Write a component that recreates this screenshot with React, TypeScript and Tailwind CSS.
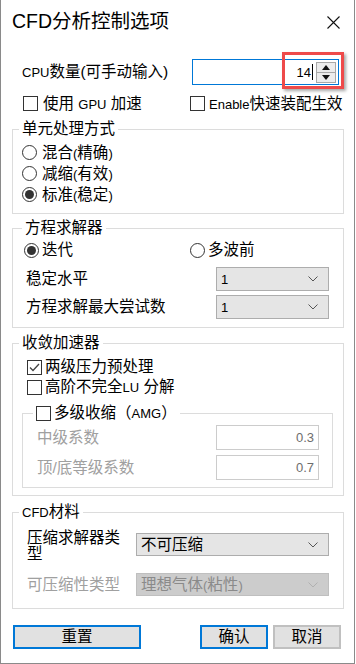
import React from 'react';

const Lat: React.FC<{ children: React.ReactNode }> = ({ children }) => (
  <span className="text-[13px]">{children}</span>
);

const Checkbox: React.FC<{ checked?: boolean }> = ({ checked }) => (
  <div className="w-[15px] h-[15px] shrink-0 border border-[#333333] bg-white flex items-center justify-center">
    {checked && (
      <svg width="11" height="9" viewBox="0 0 11 9">
        <path d="M1 4.5 L4 7.5 L10 1" fill="none" stroke="#444" strokeWidth="1.3" />
      </svg>
    )}
  </div>
);

const Radio: React.FC<{ checked?: boolean }> = ({ checked }) => (
  <div className="w-[15px] h-[15px] shrink-0 rounded-full border border-[#333333] bg-white flex items-center justify-center">
    {checked && <div className="w-[9px] h-[9px] rounded-full bg-[#333333]" />}
  </div>
);

const Chevron: React.FC<{ color?: string }> = ({ color = '#555' }) => (
  <svg width="10" height="6" viewBox="0 0 10 6">
    <path d="M0.5 0.5 L5 5 L9.5 0.5" fill="none" stroke={color} strokeWidth="1" />
  </svg>
);

const SelectBox: React.FC<{ value: React.ReactNode; className: string; disabled?: boolean }> = ({
  value,
  className,
  disabled,
}) => (
  <div
    className={`flex items-center justify-between border pl-[4px] pr-[10px] ${
      disabled ? 'bg-[#cccccc] border-[#bfbfbf] text-[#8a8a8a]' : 'bg-[#e5e5e5] border-[#adadad] text-black'
    } ${className}`}
  >
    <span>{value}</span>
    <Chevron color={disabled ? '#b0b0b0' : '#555'} />
  </div>
);

const Legend: React.FC<{ children: React.ReactNode; className?: string }> = ({ children, className = 'ml-[6px]' }) => (
  <legend className={`px-[3px] leading-[20px] ${className}`}>{children}</legend>
);

export default function App() {
  return (
    <div className="w-[355px] h-[664px] bg-white border-l border-r border-b border-[#8a8a8a] relative font-['Liberation_Sans','Noto_Sans_CJK_SC',sans-serif] text-[15.5px] text-black leading-none">
      {/* Title bar */}
      <div className="h-[44px] flex items-start justify-between pl-[11px] pr-[14px] pt-[9px]">
        <div className="text-[19.5px] leading-[24px]">CFD分析控制选项</div>
        <svg width="13" height="13" viewBox="0 0 13 13" className="mt-[7px]">
          <path d="M0.5 0.5 L12.5 12.5 M12.5 0.5 L0.5 12.5" stroke="#111" strokeWidth="1.1" />
        </svg>
      </div>

      {/* CPU row */}
      <div className="mt-[15px] h-[26px] flex items-center pl-[21px]">
        <div className="w-[170px]">
          <Lat>CPU</Lat>数量(可手动输入)
        </div>
        <div className="w-[147px] h-[26px] border border-[#0078d7] flex items-center justify-end pr-[2px]">
          <span className="text-[13px] mr-[1px]">14</span>
          <div className="w-[1px] h-[16px] bg-black mr-[3px]" />
          <div className="w-[20px] h-[21px] border border-[#a8a8a8] flex flex-col">
            <div className="flex-1 bg-[#ececec] border-b border-[#a8a8a8] flex items-center justify-center">
              <svg width="8" height="5" viewBox="0 0 8 5">
                <path d="M0 5 L4 0 L8 5 Z" fill="#111" />
              </svg>
            </div>
            <div className="flex-1 bg-[#ececec] flex items-center justify-center">
              <svg width="8" height="5" viewBox="0 0 8 5">
                <path d="M0 0 L4 5 L8 0 Z" fill="#111" />
              </svg>
            </div>
          </div>
        </div>
      </div>

      {/* Checkbox row */}
      <div className="mt-[10px] h-[17px] flex items-center pl-[22px]">
        <div className="w-[167px] flex items-center gap-[5px]">
          <Checkbox />
          <span>
            使用 <Lat>GPU</Lat> 加速
          </span>
        </div>
        <div className="flex items-center gap-[4px] whitespace-nowrap">
          <Checkbox />
          <span>
            <Lat>Enable</Lat>快速装配生效
          </span>
        </div>
      </div>

      {/* 单元处理方式 */}
      <fieldset className="mt-[7px] ml-[11px] mr-[10px] border border-[#dcdcdc]">
        <Legend>单元处理方式</Legend>
        <div className="mt-[3px] pl-[9px] pb-[8px]">
          {[
            ['混合', '精确', false],
            ['减缩', '有效', false],
            ['标准', '稳定', true],
          ].map(([a, b, c]) => (
            <div key={a as string} className="h-[21px] flex items-center gap-[5px]">
              <Radio checked={c as boolean} />
              <span>
                {a}
                <Lat>(</Lat>
                {b}
                <Lat>)</Lat>
              </span>
            </div>
          ))}
        </div>
      </fieldset>

      {/* 方程求解器 */}
      <fieldset className="mt-[4px] ml-[11px] mr-[10px] border border-[#dcdcdc]">
        <Legend className="ml-[9px]">方程求解器</Legend>
        <div className="pl-[11px] pr-[14px] pb-[8px]">
          <div className="mt-[1px] h-[22px] flex items-center">
            <div className="w-[166px] flex items-center gap-[3px]">
              <Radio checked />
              <span>迭代</span>
            </div>
            <div className="flex items-center gap-[3px]">
              <Radio />
              <span>多波前</span>
            </div>
          </div>
          <div className="mt-[6px] h-[24px] flex items-center justify-between">
            <span className="ml-[2px]">稳定水平</span>
            <SelectBox value={<Lat>1</Lat>} className="w-[113px] h-[24px]" />
          </div>
          <div className="mt-[4px] h-[24px] flex items-center justify-between">
            <span className="ml-[2px]">方程求解最大尝试数</span>
            <SelectBox value={<Lat>1</Lat>} className="w-[113px] h-[24px]" />
          </div>
        </div>
      </fieldset>

      {/* 收敛加速器 */}
      <fieldset className="mt-[5px] ml-[11px] mr-[10px] border border-[#dcdcdc]">
        <Legend>收敛加速器</Legend>
        <div className="pb-[7px]">
          <div className="mt-[4px] pl-[14px]">
            <div className="h-[20px] flex items-center gap-[3px]">
              <Checkbox checked />
              <span>两级压力预处理</span>
            </div>
            <div className="h-[20px] flex items-center gap-[3px]">
              <Checkbox />
              <span>
                高阶不完全<Lat>LU</Lat> 分解
              </span>
            </div>
          </div>
          <fieldset className="mt-[6px] ml-[9px] mr-[10px] border border-[#dcdcdc]">
            <legend className="ml-[10px] px-[3px] h-[20px] flex items-center gap-[3px]">
              <Checkbox />
              <span>
                多级收缩（<Lat>AMG</Lat>）
              </span>
            </legend>
            <div className="pl-[14px] pr-[13px] pb-[7px]">
              <div className="mt-[2px] h-[25px] flex items-center justify-between text-[#a0a0a0]">
                <span>中级系数</span>
                <div className="w-[103px] h-[25px] border border-[#cccccc] flex items-center justify-end pr-[4px] text-[#6d6d6d]">
                  <Lat>0.3</Lat>
                </div>
              </div>
              <div className="mt-[5px] h-[25px] flex items-center justify-between text-[#a0a0a0]">
                <span>顶/底等级系数</span>
                <div className="w-[103px] h-[25px] border border-[#cccccc] flex items-center justify-end pr-[4px] text-[#6d6d6d]">
                  <Lat>0.7</Lat>
                </div>
              </div>
            </div>
          </fieldset>
        </div>
      </fieldset>

      {/* CFD材料 */}
      <fieldset className="mt-[6px] ml-[11px] mr-[10px] border border-[#dcdcdc]">
        <Legend>
          <Lat>CFD</Lat>材料
        </Legend>
        <div className="pl-[14px] pr-[14px] pb-[12px]">
          <div className="mt-[10px] h-[23px] flex items-start">
            <div className="w-[100px] leading-[16px] -mt-[3px]">压缩求解器类型</div>
            <SelectBox value="不可压缩" className="ml-auto w-[193px] h-[23px]" />
          </div>
          <div className="mt-[17px] h-[23px] flex items-center">
            <span className="text-[#a0a0a0]">可压缩性类型</span>
            <SelectBox
              value={
                <>
                  理想气体<Lat>(</Lat>粘性<Lat>)</Lat>
                </>
              }
              disabled
              className="ml-auto w-[193px] h-[23px]"
            />
          </div>
        </div>
      </fieldset>

      {/* Buttons */}
      <div className="mt-[16px] flex items-center pl-[12px]">
        <button className="w-[128px] h-[24px] border-2 border-[#0078d7] bg-[#e1e1e1] flex items-center justify-center">
          重置
        </button>
        <button className="ml-[59px] w-[68px] h-[24px] border-2 border-[#0078d7] bg-[#e1e1e1] flex items-center justify-center">
          确认
        </button>
        <button className="ml-[5px] w-[68px] h-[24px] border-2 border-[#c0c0c0] bg-[#e1e1e1] flex items-center justify-center">
          取消
        </button>
      </div>

      {/* Red highlight annotation over spinner */}
      <div className="absolute left-[281px] top-[52px] w-[62px] h-[37px] border-[3px] border-[#ee4a4a] shadow-[2px_2px_3px_rgba(0,0,0,0.35)]" />
    </div>
  );
}
